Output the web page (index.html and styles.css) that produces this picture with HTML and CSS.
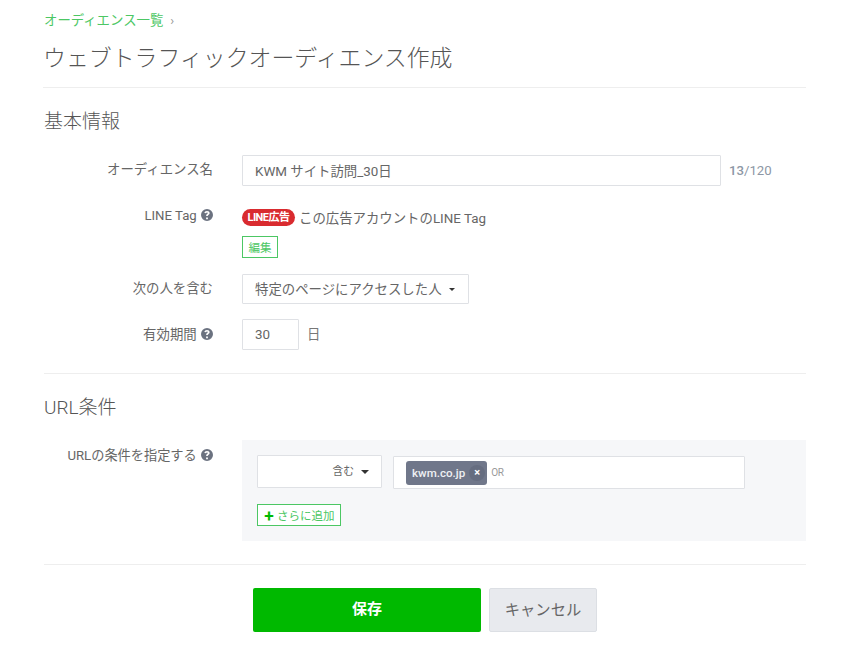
FILE: index.html
```html
<!DOCTYPE html>
<html lang="ja">
<head>
  <meta charset="UTF-8" />
  <title>ウェブトラフィックオーディエンス作成</title>
  <link rel="stylesheet" href="styles.css">
</head>
<body>
  <div class="page">
    <div class="breadcrumb"><a class="green-link">オーディエンス一覧</a><span class="crumb-sep">›</span></div>
    <h1 class="title">ウェブトラフィックオーディエンス作成</h1>

    <section class="section">
      <h2 class="section-title">基本情報</h2>

      <div class="row row-name">
        <div class="label">オーディエンス名</div>
        <div class="field">
          <div class="input input-name">KWM サイト訪問_30日</div>
          <div class="counter"><b>13</b>/120</div>
        </div>
      </div>

      <div class="row row-tag">
        <div class="label label-dark">LINE Tag
          <svg class="help" viewBox="0 0 12 12"><use href="#help"/></svg>
        </div>
        <div class="field-stack">
          <div class="tag-line"><span class="badge">LINE広告</span><span>この広告アカウントのLINE Tag</span></div>
          <button class="btn-line btn-edit">編集</button>
        </div>
      </div>

      <div class="row row-audience">
        <div class="label">次の人を含む</div>
        <div class="field">
          <div class="input select-people">特定のページにアクセスした人<i class="caret"></i></div>
        </div>
      </div>

      <div class="row row-term">
        <div class="label label-term">有効期間
          <svg class="help" viewBox="0 0 12 12"><use href="#help"/></svg>
        </div>
        <div class="field">
          <div class="input input-days">30</div>
          <div class="unit">日</div>
        </div>
      </div>
    </section>

    <section class="section section-url">
      <h2 class="section-title">URL条件</h2>
      <div class="row">
        <div class="label label-dark label-url">URLの条件を指定する
          <svg class="help" viewBox="0 0 12 12"><use href="#help"/></svg>
        </div>
        <div class="url-panel">
          <div class="url-line">
            <div class="input select-match">含む<i class="caret"></i></div>
            <div class="input tag-input">
              <span class="chip">kwm.co.jp<span class="chip-x">×</span></span>
              <span class="or">OR</span>
            </div>
          </div>
          <button class="btn-line btn-add"><span class="plus">✚</span>さらに追加</button>
        </div>
      </div>
    </section>

    <div class="actions">
      <button class="btn-save">保存</button>
      <button class="btn-cancel">キャンセル</button>
    </div>
  </div>

  <svg class="defs" width="0" height="0">
    <symbol id="help" viewBox="0 0 12 12">
      <path fill-rule="evenodd" fill="#6b7280" d="M6 0a6 6 0 1 1 0 12A6 6 0 0 1 6 0zM5.1 8.5v1.7h1.8V8.5zM6 1.9c-1.5 0-2.5.8-2.6 2.2l1.7.2c.1-.6.4-.9.9-.9s.8.3.8.7c0 .4-.2.6-.7 1-.7.5-1 1-1 1.8v.2h1.7v-.2c0-.4.1-.6.6-.9.7-.5 1.2-1 1.2-2 0-1.3-1-2.1-2.6-2.1z"/>
    </symbol>
  </svg>
</body>
</html>
```

FILE: styles.css
```css
body {
  margin: 0;
  background: white;
  color: #666;
  font-family: Roboto, "Noto Sans CJK JP", sans-serif;
  font-size: 13.4px;
}
.page {
  padding: 12px 44px 0;
}
.defs {
  position: absolute;
}
.breadcrumb {
  height: 18px;
  line-height: 18px;
  font-size: 13.4px;
}
.green-link {
  color: #4cc764;
}
.crumb-sep {
  color: #999;
  margin-left: 7px;
  font-size: 13px;
}
.title {
  margin: 0 0 0 -1px;
  padding: 12px 0 11px;
  height: 34px;
  line-height: 34px;
  font-size: 22.9px;
  font-weight: 300;
  color: #555;
  border-bottom: 1px solid #eee;
}
.section {
  padding-bottom: 23px;
  border-bottom: 1px solid #eee;
}
.section-title {
  margin: 0;
  padding: 21px 0 21px;
  height: 25px;
  line-height: 25px;
  font-size: 19px;
  font-weight: 300;
  color: #555;
}
.section-url .section-title {
  padding-bottom: 20px;
}
.row {
  display: flex;
}
.label {
  width: 169px;
  margin-right: 29px;
  text-align: right;
  line-height: 29px;
  color: #666;
  flex-shrink: 0;
}
.label-dark {
  font-size: 13.2px;
  line-height: 14px;
}
.label-term {
  line-height: 31px;
}
.label-url {
  padding-top: 9px;
}
.help {
  width: 12px;
  height: 12px;
  vertical-align: -1px;
  margin-left: 1px;
}
.field {
  display: flex;
  align-items: center;
}
.input {
  box-sizing: border-box;
  background: white;
  border: 1px solid #dfe1e5;
  border-radius: 1px;
  color: #666;
  font-size: 13.4px;
  padding: 0 12px 2px;
  display: flex;
  align-items: center;
  white-space: nowrap;
}
.input-name {
  width: 479px;
  height: 31px;
}
.counter {
  margin-left: 8px;
  font-size: 13.2px;
  color: #8d97a5;
}
.counter b {
  font-weight: 500;
}
.row-tag {
  padding-top: 22px;
}
.row-tag .label {
  padding-top: 1px;
}
.field-stack {
  display: flex;
  flex-direction: column;
  align-items: flex-start;
}
.tag-line {
  display: flex;
  align-items: center;
  height: 18px;
  color: #666;
}
.badge {
  background: #d92b2f;
  color: white;
  font-size: 11px;
  font-weight: 700;
  line-height: 17px;
  height: 17px;
  width: 53px;
  text-align: center;
  border-radius: 9px;
  margin-right: 4px;
  letter-spacing: -0.5px;
  white-space: nowrap;
}
.btn-line {
  background: white;
  border: 1px solid #4cc764;
  color: #4cc764;
  font-family: inherit;
  padding: 0;
  border-radius: 0;
}
.btn-edit {
  margin-top: 10px;
  width: 36px;
  height: 22px;
  font-size: 11.5px;
}
.row-audience {
  padding-top: 16px;
}
.select-people {
  width: 227px;
  height: 30px;
  padding-bottom: 3px;
}
.caret {
  display: inline-block;
  border-top: 4px solid #333;
  border-left: 4px solid transparent;
  border-right: 4px solid transparent;
  margin-left: 7px;
  margin-top: 2px;
}
.select-people .caret {
  border-width: 3px 3.5px 0;
  border-color: #333 transparent transparent;
  margin-top: 3px;
}
.row-term {
  padding-top: 15px;
}
.input-days {
  width: 57px;
  height: 31px;
  padding-bottom: 0;
}
.unit {
  margin-left: 8px;
  margin-bottom: 3px;
  color: #777;
}
.url-panel {
  box-sizing: border-box;
  width: 564px;
  height: 101px;
  padding: 15px;
  background: #f6f7f9;
}
.url-line {
  display: flex;
  gap: 11px;
}
.select-match {
  width: 125px;
  height: 33px;
  justify-content: flex-end;
  font-size: 10.8px;
  padding-bottom: 4px;
}
.select-match .caret {
  margin-left: 7px;
  margin-top: 5px;
}
.tag-input {
  width: 352px;
  height: 33px;
  margin-top: 1px;
  padding: 0 12px;
}
.chip {
  display: flex;
  align-items: center;
  height: 24px;
  padding: 0 0 0 6px;
  background: #70778a;
  color: #eef0f3;
  font-size: 11.6px;
  font-weight: 500;
  border-radius: 3px;
}
.chip-x {
  width: 16px;
  height: 16px;
  margin: 0 2px 0 4px;
  line-height: 15px;
  text-align: center;
  font-weight: 700;
  font-size: 11px;
  color: white;
  background: #666d80;
  border-radius: 50%;
}
.or {
  margin-left: 4px;
  font-size: 10px;
  color: #999;
  letter-spacing: -0.5px;
}
.btn-add {
  display: flex;
  align-items: center;
  margin-top: 15px;
  width: 84px;
  height: 22px;
  font-size: 11.5px;
  padding-left: 6px;
}
.plus {
  color: #00b900;
  font-size: 10px;
  margin-right: 3px;
}
.actions {
  display: flex;
  gap: 8px;
  padding: 23px 0 0 209px;
}
.btn-save {
  width: 228px;
  height: 44px;
  padding-bottom: 6px;
  background: #00b900;
  border: none;
  border-radius: 2px;
  color: white;
  font-family: inherit;
  font-size: 15px;
  font-weight: 700;
}
.btn-cancel {
  width: 108px;
  height: 44px;
  padding-bottom: 5px;
  background: #e8eaee;
  border: 1px solid #dcdfe4;
  border-radius: 2px;
  color: #666;
  font-family: inherit;
  font-size: 15.3px;
}
```
